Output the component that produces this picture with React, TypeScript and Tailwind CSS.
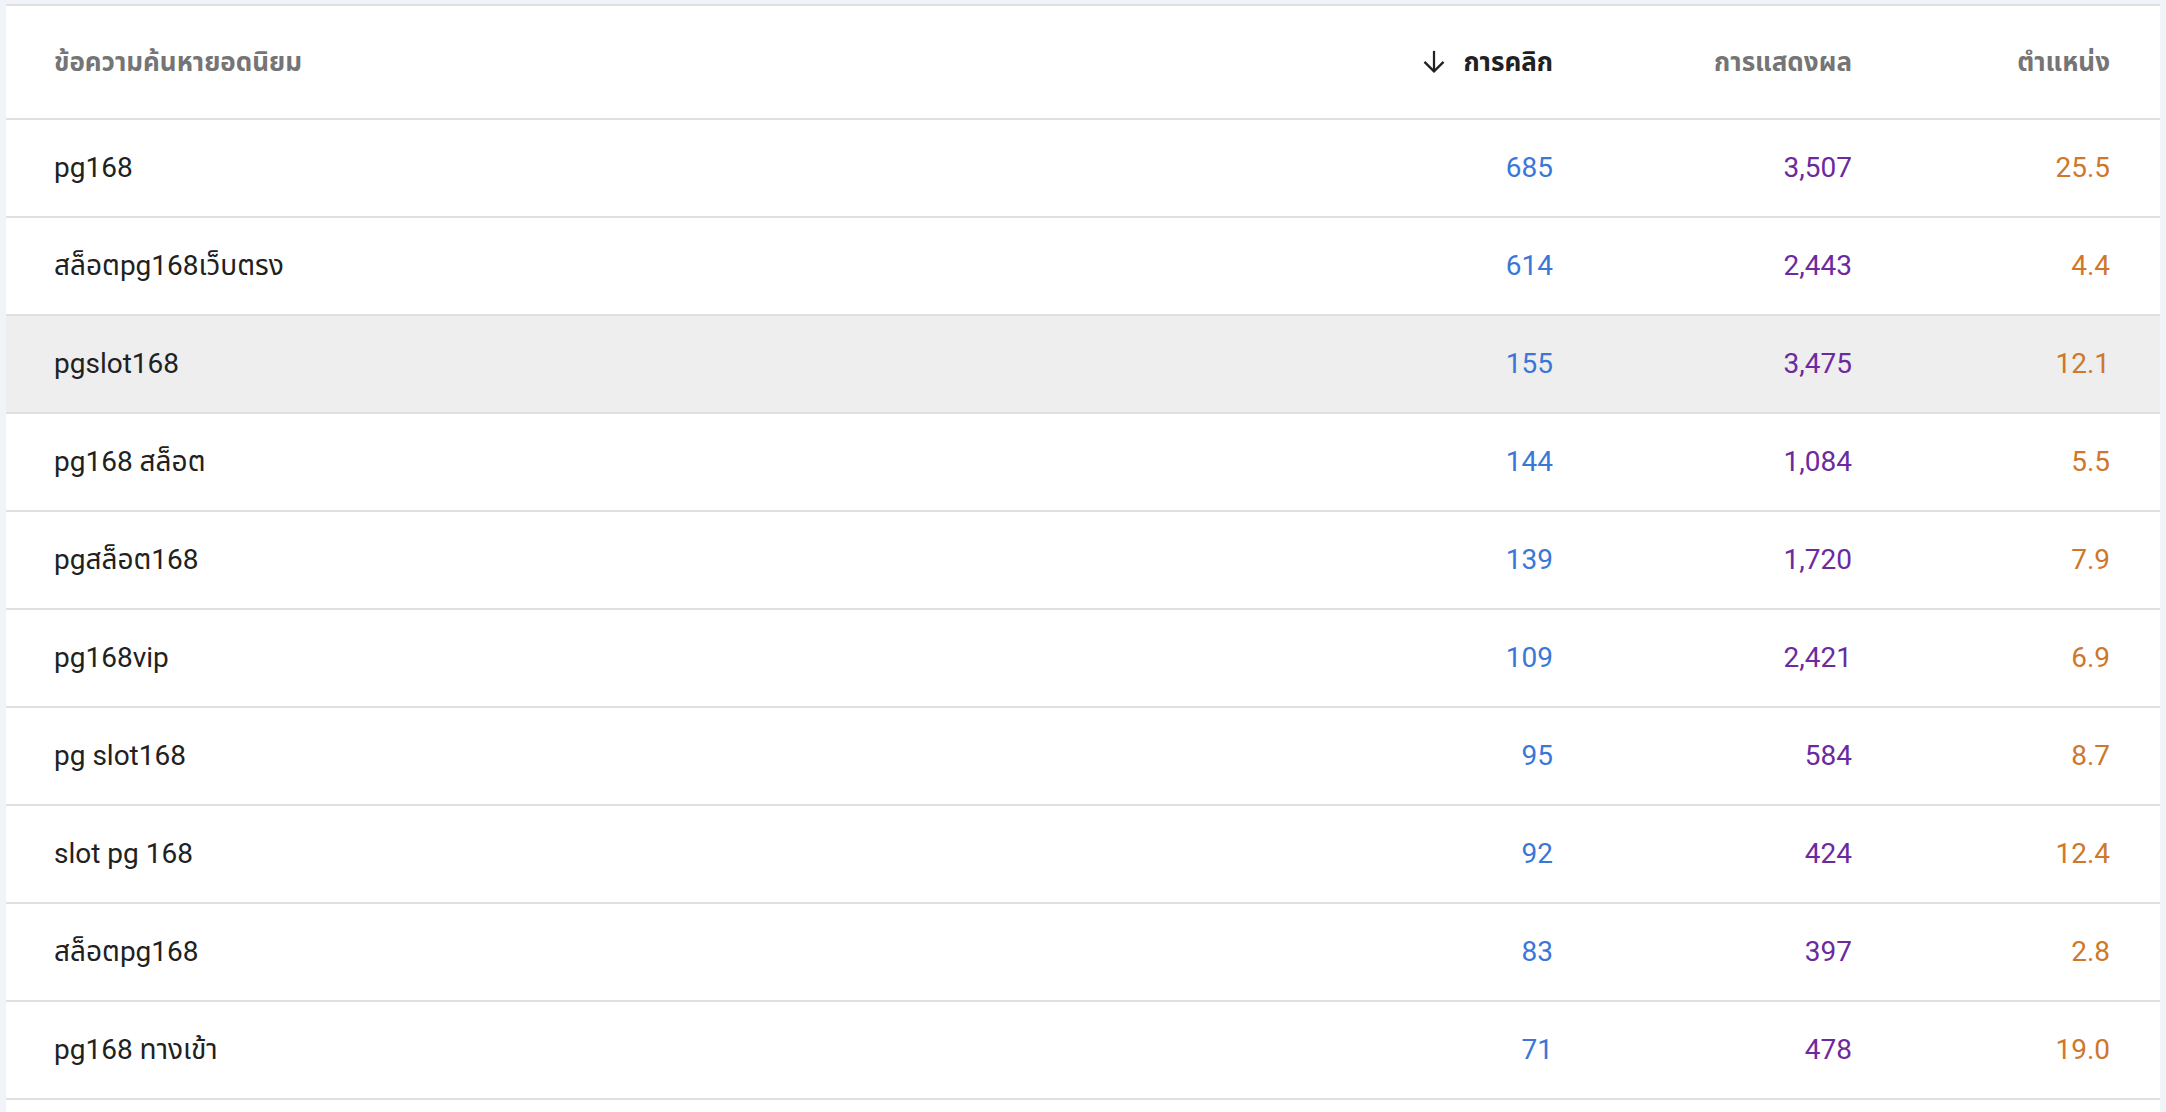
import React from 'react';

type Row = { query: string; clicks: string; impressions: string; position: string };

const rows: Row[] = [
  { query: 'pg168', clicks: '685', impressions: '3,507', position: '25.5' },
  { query: 'สล็อตpg168เว็บตรง', clicks: '614', impressions: '2,443', position: '4.4' },
  { query: 'pgslot168', clicks: '155', impressions: '3,475', position: '12.1' },
  { query: 'pg168 สล็อต', clicks: '144', impressions: '1,084', position: '5.5' },
  { query: 'pgสล็อต168', clicks: '139', impressions: '1,720', position: '7.9' },
  { query: 'pg168vip', clicks: '109', impressions: '2,421', position: '6.9' },
  { query: 'pg slot168', clicks: '95', impressions: '584', position: '8.7' },
  { query: 'slot pg 168', clicks: '92', impressions: '424', position: '12.4' },
  { query: 'สล็อตpg168', clicks: '83', impressions: '397', position: '2.8' },
  { query: 'pg168 ทางเข้า', clicks: '71', impressions: '478', position: '19.0' },
];

// the row under the pointer in the capture
const hovered = 2;

function ArrowDown() {
  return (
    <svg width="30" height="30" viewBox="0 0 24 24" fill="none" stroke="currentColor" strokeWidth="1.8" strokeLinecap="square">
      <path d="M12 4v15" />
      <path d="M5 12.5 12 19.5l7-7" />
    </svg>
  );
}

export default function App() {
  return (
    <div
      className="min-h-screen bg-[#f0f4f9] pt-[4px] px-[6px] text-[#212121]"
      style={{ fontFamily: "Roboto, 'Noto Sans Thai', 'Noto Sans', 'Liberation Sans', sans-serif" }}
    >
      <div className="bg-white border-t-2 border-[#e0e0e0] min-h-[1108px]">
        <div className="grid grid-cols-[1fr_300px_299px_258px] items-center h-[114px] pl-[48px] pr-[50px] border-b-2 border-[#e0e0e0] text-[26px] font-bold text-[#757575]">
          <div>ข้อความค้นหายอดนิยม</div>
          <div className="flex items-center justify-end gap-[14px] text-[#212121]">
            <ArrowDown />
            <span>การคลิก</span>
          </div>
          <div className="text-right">การแสดงผล</div>
          <div className="text-right">ตำแหน่ง</div>
        </div>
        {rows.map((r, i) => (
          <div
            key={r.query}
            className={
              'grid grid-cols-[1fr_300px_299px_258px] items-center h-[98px] pl-[48px] pr-[50px] border-b-2 border-[#e0e0e0] text-[28px] ' +
              (i === hovered ? 'bg-[#eeeeee]' : 'bg-white')
            }
          >
            <div>{r.query}</div>
            <div className="text-right text-[#3b77d6]">{r.clicks}</div>
            <div className="text-right text-[#6c2aa0]">{r.impressions}</div>
            <div className="text-right text-[#cf772b]">{r.position}</div>
          </div>
        ))}
      </div>
    </div>
  );
}
